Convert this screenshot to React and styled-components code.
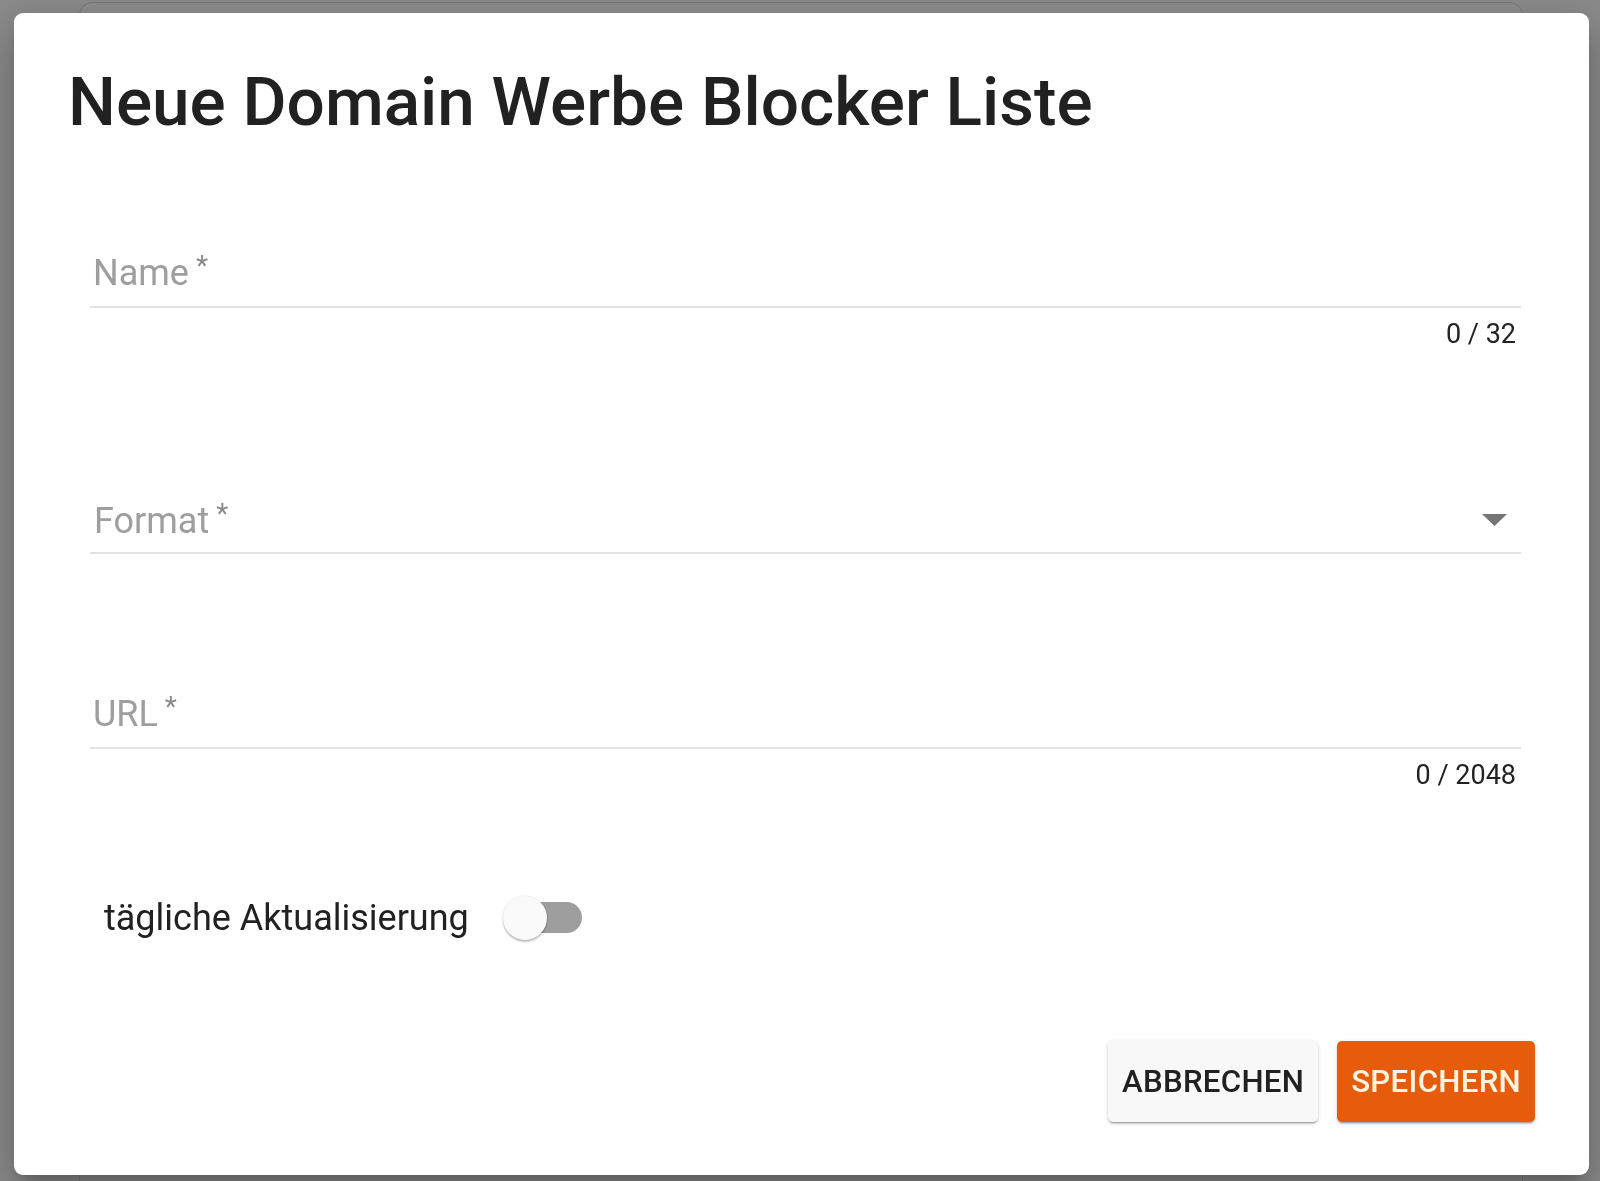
import React, { useState } from "react";
import styled, { createGlobalStyle } from "styled-components";

const GlobalStyle = createGlobalStyle`
  html, body {
    margin: 0;
    padding: 0;
    background: #8b8b8b;
    font-family: Roboto, "Noto Sans", "Liberation Sans", sans-serif;
    overflow: hidden;
  }
`;

// the page behind the overlay, only its top edge is visible
const Page = styled.div`
  height: 1181px;
  padding: 2px 77px 0 79px;
  box-sizing: border-box;
`;

const BackCard = styled.div`
  height: 100%;
  border: 1px solid #7c7c7c;
  border-bottom: none;
  border-radius: 14px 14px 0 0;
  background: #8e8e8e;
`;

const Overlay = styled.div`
  position: fixed;
  inset: 0;
`;

const Dialog = styled.div`
  position: absolute;
  left: 14px;
  top: 13px;
  width: 1575px;
  height: 1162px;
  box-sizing: border-box;
  background: #fff;
  border-radius: 9px;
  box-shadow: 0 11px 15px -7px rgba(0, 0, 0, 0.2),
    0 24px 38px 3px rgba(0, 0, 0, 0.14), 0 9px 46px 8px rgba(0, 0, 0, 0.12);
  display: flex;
  flex-direction: column;
  padding: 50px 54px 53px 54px;
`;

const Title = styled.h2`
  margin: 0;
  font-size: 67.5px;
  line-height: 78px;
  font-weight: 500;
  color: #212121;
  letter-spacing: 0;
`;

const Form = styled.div`
  display: flex;
  flex-direction: column;
  padding: 0 14px 0 22px;
`;

const Field = styled.div`
  display: flex;
  flex-direction: column;
  margin-top: ${({ $gap }) => $gap}px;
`;

const InputRow = styled.div`
  display: flex;
  align-items: center;
  justify-content: space-between;
  padding: 0 14px ${({ $tight }) => ($tight ? 9 : 11)}px
    ${({ $tight }) => ($tight ? 4 : 3)}px;
  border-bottom: 2px solid #e2e2e2;
`;

const Label = styled.label`
  font-size: 36px;
  line-height: 44px;
  color: #9e9e9e;
  font-weight: 400;
  &::after {
    content: " *";
    font-size: 28px;
    vertical-align: 10px;
    color: #8a8a8a;
  }
`;

const Counter = styled.div`
  align-self: flex-end;
  margin-top: 9px;
  padding-right: 5px;
  font-size: 27px;
  line-height: 34px;
  color: #222;
`;

const Caret = styled.svg`
  display: block;
  width: 25px;
  height: 12px;
  margin-top: 4px;
`;

const SwitchRow = styled.div`
  display: flex;
  align-items: center;
  gap: 34px;
  margin-top: 104px;
  padding-left: 14px;
`;

const SwitchLabel = styled.span`
  font-size: 36px;
  line-height: 44px;
  color: #212121;
`;

const Switch = styled.button`
  position: relative;
  width: 79px;
  height: 44px;
  padding: 0;
  border: none;
  background: transparent;
  cursor: pointer;
`;

const Track = styled.span`
  position: absolute;
  left: 7px;
  right: 0;
  top: 6px;
  height: 31px;
  border-radius: 16px;
  background: ${({ $on }) => ($on ? "#f4a77a" : "#9e9e9e")};
`;

const Thumb = styled.span`
  position: absolute;
  top: 0;
  left: ${({ $on }) => ($on ? "35px" : "0")};
  width: 44px;
  height: 44px;
  border-radius: 50%;
  background: ${({ $on }) => ($on ? "#e65c0c" : "#fafafa")};
  box-shadow: 0 2px 2px rgba(0, 0, 0, 0.24), 0 0 2px rgba(0, 0, 0, 0.12);
`;

const Actions = styled.div`
  margin-top: auto;
  display: flex;
  justify-content: flex-end;
  gap: 19px;
`;

const Button = styled.button`
  height: 81px;
  padding: 0 14px;
  border: none;
  border-radius: 5px;
  font-family: Roboto, "Liberation Sans", sans-serif;
  font-size: 31.2px;
  font-weight: 500;
  letter-spacing: 0.3px;
  text-transform: uppercase;
  cursor: pointer;
  background: ${({ $primary }) => ($primary ? "#e65c0c" : "#f8f8f8")};
  color: ${({ $primary }) => ($primary ? "#fff4e2" : "#212121")};
  box-shadow: 0 3px 1px -2px rgba(0, 0, 0, 0.2), 0 2px 2px rgba(0, 0, 0, 0.14),
    0 1px 5px rgba(0, 0, 0, 0.12);
`;

export default function App() {
  const [daily, setDaily] = useState(false);

  return (
    <>
      <GlobalStyle />
      <Page>
        <BackCard />
      </Page>
      <Overlay>
        <Dialog>
          <Title>Neue Domain Werbe Blocker Liste</Title>
          <Form>
            <Field $gap={103}>
              <InputRow>
                <Label>Name</Label>
              </InputRow>
              <Counter>0 / 32</Counter>
            </Field>
            <Field $gap={141}>
              <InputRow $tight>
                <Label>Format</Label>
                <Caret viewBox="0 0 25 12">
                  <path d="M0 0 L25 0 L12.5 12 Z" fill="#757575" />
                </Caret>
              </InputRow>
            </Field>
            <Field $gap={131}>
              <InputRow>
                <Label>URL</Label>
              </InputRow>
              <Counter>0 / 2048</Counter>
            </Field>
            <SwitchRow>
              <SwitchLabel>tägliche Aktualisierung</SwitchLabel>
              <Switch
                role="switch"
                aria-checked={daily}
                onClick={() => setDaily(!daily)}
              >
                <Track $on={daily} />
                <Thumb $on={daily} />
              </Switch>
            </SwitchRow>
          </Form>
          <Actions>
            <Button>Abbrechen</Button>
            <Button $primary>Speichern</Button>
          </Actions>
        </Dialog>
      </Overlay>
    </>
  );
}
